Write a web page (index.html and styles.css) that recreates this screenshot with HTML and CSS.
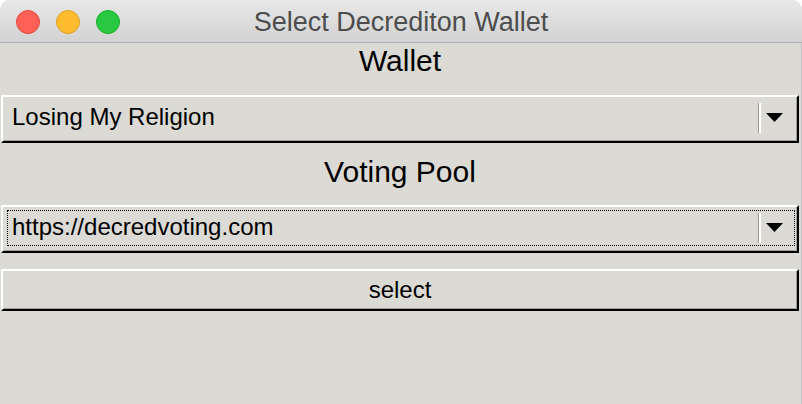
FILE: index.html
```html
<!DOCTYPE html>
<html>
<head>
<meta charset="utf-8">
<title>Select Decrediton Wallet</title>
<link rel="stylesheet" href="styles.css">
</head>
<body>
<div class="window">
  <div class="titlebar">
    <div class="lights">
      <span class="light red"></span>
      <span class="light yellow"></span>
      <span class="light green"></span>
    </div>
    <div class="title">Select Decrediton Wallet</div>
  </div>
  <div class="content">
    <div class="label label-wallet">Wallet</div>
    <div class="combo">
      <div class="field">
        <span class="value">Losing My Religion</span>
        <span class="sep"></span>
        <svg class="arrow" width="17" height="9" viewBox="0 0 17 9"><polygon points="0,0 17,0 8.5,9" fill="#000"/></svg>
      </div>
    </div>
    <div class="label label-pool">Voting Pool</div>
    <div class="combo">
      <div class="field focus">
        <span class="value">https://decredvoting.com</span>
        <span class="sep"></span>
        <svg class="arrow" width="17" height="9" viewBox="0 0 17 9"><polygon points="0,0 17,0 8.5,9" fill="#000"/></svg>
      </div>
    </div>
    <div class="button">select</div>
  </div>
</div>
</body>
</html>
```

FILE: styles.css
```css
html, body {
  margin: 0;
  padding: 0;
  background: #ffffff;
}

body {
  width: 802px;
  height: 404px;
  overflow: hidden;
  font-family: "Liberation Sans", Arial, sans-serif;
}

.window {
  width: 802px;
  height: 404px;
  display: flex;
  flex-direction: column;
  border-radius: 10px 10px 0 0;
  overflow: hidden;
  background: #dcdad5;
}

.titlebar {
  position: relative;
  height: 42px;
  flex: none;
  border-bottom: 1px solid #b0b0b0;
  background: linear-gradient(#e8e8e8, #d2d2d2);
  display: flex;
  align-items: center;
  justify-content: center;
}

.lights {
  position: absolute;
  left: 16px;
  top: 10px;
  display: flex;
  gap: 16px;
}

.light {
  width: 22px;
  height: 22px;
  border-radius: 50%;
  border: 1px solid transparent;
}

.red { background: #fe5f57; border-color: #e2463f; }
.yellow { background: #febc2e; border-color: #dfa123; }
.green { background: #28c840; border-color: #1dad2b; }

.title {
  font-family: "Liberation Sans", Arial, sans-serif;
  font-size: 27px;
  color: #4d4d4d;
  line-height: 42px;
  margin-top: 1px;
}

.content {
  flex: 1;
  display: flex;
  flex-direction: column;
  padding: 0 2px 0 1px;
  border-right: 1px solid #c2c2c2;
  background: #dcdad5;
}

.label {
  text-align: center;
  font-size: 30px;
  line-height: 36px;
  color: #000;
}

.label-wallet {
  margin-bottom: 16px;
}

.label-pool {
  margin-top: 11px;
  margin-bottom: 15px;
}

.combo {
  border-top: 2px solid #ffffff;
  border-left: 2px solid #ffffff;
  border-right: 2px solid #000000;
  border-bottom: 2px solid #000000;
  box-shadow: inset -1px -1px 0 #a3a09a;
  padding: 3px 2px 5px 4px;
  background: #dcdad5;
}

.field {
  height: 34px;
  border: 1px solid transparent;
  display: flex;
  align-items: center;
  padding-left: 4px;
}

.field.focus {
  border: 1px dotted #000;
}

.value {
  font-size: 24px;
  color: #000;
  line-height: 34px;
  margin-top: -2px;
}

.sep {
  margin-left: auto;
  width: 2px;
  height: 30px;
  border-left: 1px solid #9c9993;
  background: #ffffff;
}

.arrow {
  display: block;
  margin-left: 5px;
  margin-right: 11px;
  margin-top: -1px;
}

.button {
  margin-top: 16px;
  height: 38px;
  border-top: 2px solid #ffffff;
  border-left: 2px solid #ffffff;
  border-right: 2px solid #000000;
  border-bottom: 2px solid #000000;
  box-shadow: inset -1px -1px 0 #a3a09a;
  text-align: center;
  font-size: 24px;
  line-height: 38px;
  color: #000;
}
```
